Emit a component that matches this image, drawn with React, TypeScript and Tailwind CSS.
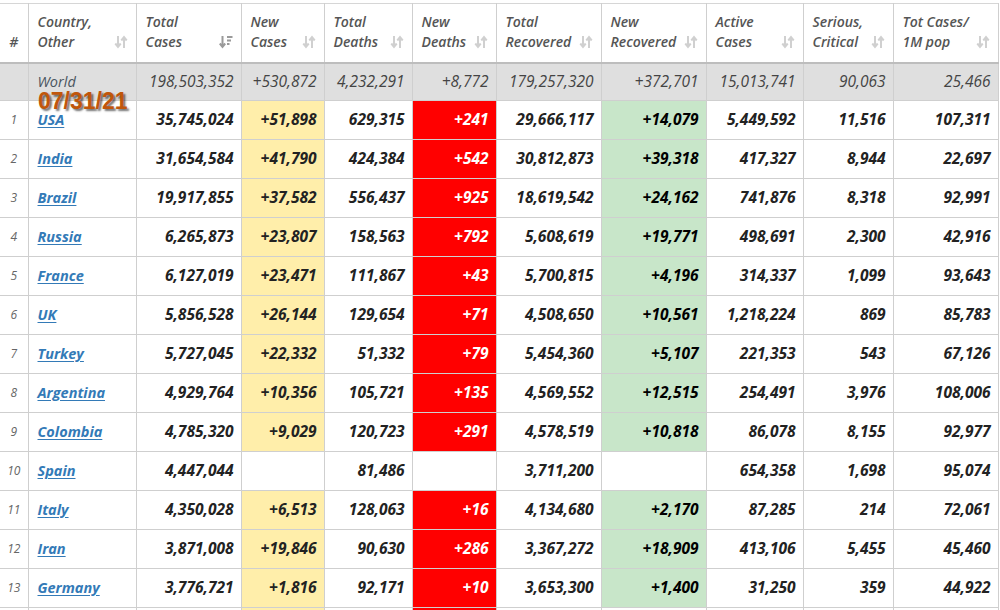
const rows: string[][] = [
  ["1", "USA", "35,745,024", "+51,898", "629,315", "+241", "29,666,117", "+14,079", "5,449,592", "11,516", "107,311"],
  ["2", "India", "31,654,584", "+41,790", "424,384", "+542", "30,812,873", "+39,318", "417,327", "8,944", "22,697"],
  ["3", "Brazil", "19,917,855", "+37,582", "556,437", "+925", "18,619,542", "+24,162", "741,876", "8,318", "92,991"],
  ["4", "Russia", "6,265,873", "+23,807", "158,563", "+792", "5,608,619", "+19,771", "498,691", "2,300", "42,916"],
  ["5", "France", "6,127,019", "+23,471", "111,867", "+43", "5,700,815", "+4,196", "314,337", "1,099", "93,643"],
  ["6", "UK", "5,856,528", "+26,144", "129,654", "+71", "4,508,650", "+10,561", "1,218,224", "869", "85,783"],
  ["7", "Turkey", "5,727,045", "+22,332", "51,332", "+79", "5,454,360", "+5,107", "221,353", "543", "67,126"],
  ["8", "Argentina", "4,929,764", "+10,356", "105,721", "+135", "4,569,552", "+12,515", "254,491", "3,976", "108,006"],
  ["9", "Colombia", "4,785,320", "+9,029", "120,723", "+291", "4,578,519", "+10,818", "86,078", "8,155", "92,977"],
  ["10", "Spain", "4,447,044", "", "81,486", "", "3,711,200", "", "654,358", "1,698", "95,074"],
  ["11", "Italy", "4,350,028", "+6,513", "128,063", "+16", "4,134,680", "+2,170", "87,285", "214", "72,061"],
  ["12", "Iran", "3,871,008", "+19,846", "90,630", "+286", "3,367,272", "+18,909", "413,106", "5,455", "45,460"],
  ["13", "Germany", "3,776,721", "+1,816", "92,171", "+10", "3,653,300", "+1,400", "31,250", "359", "44,922"],
]

const world = ["198,503,352", "+530,872", "4,232,291", "+8,772", "179,257,320", "+372,701", "15,013,741", "90,063", "25,466"]

const headers: [string, string][] = [
  ["Country,", "Other"],
  ["Total", "Cases"],
  ["New", "Cases"],
  ["Total", "Deaths"],
  ["New", "Deaths"],
  ["Total", "Recovered"],
  ["New", "Recovered"],
  ["Active", "Cases"],
  ["Serious,", "Critical"],
  ["Tot Cases/", "1M pop"],
]

const widths = [28, 108, 105, 83, 88, 84, 105, 105, 97, 90, 105]

function SortIcon({ active }: { active?: boolean }) {
  if (active) {
    return (
      <svg width="14" height="14" viewBox="0 0 14 14" className="shrink-0 text-[#9a9a9a]">
        <path d="M3.5 1v10.5M0.8 8.5l2.7 3.3 2.7-3.3" fill="none" stroke="currentColor" strokeWidth="2" />
        <path d="M8 2h5.5M8 5.5h4M8 9h2.5" stroke="currentColor" strokeWidth="2" />
      </svg>
    )
  }
  return (
    <svg width="14" height="14" viewBox="0 0 14 14" className="shrink-0 text-[#d0d0d0]">
      <path d="M4 1v10.5M1.3 8.5l2.7 3.3 2.7-3.3" fill="none" stroke="currentColor" strokeWidth="2" />
      <path d="M10 13V2.5M7.3 5.5l2.7-3.3 2.7 3.3" fill="none" stroke="currentColor" strokeWidth="2" />
    </svg>
  )
}

function cellBg(col: number, value: string) {
  if (!value) return ""
  if (col === 3) return "bg-[#ffeeaa]"
  if (col === 5) return "bg-[#ff0000] text-white"
  if (col === 7) return "bg-[#c8e6c9] text-black"
  return ""
}

export default function App() {
  return (
    <div className="relative h-[610px] w-[1000px] overflow-hidden bg-white pt-[3px] font-['Open_Sans',sans-serif] italic">
      <table className="w-[998px] table-fixed border-collapse">
        <colgroup>
          {widths.map((w, i) => (
            <col key={i} style={{ width: w }} />
          ))}
        </colgroup>
        <thead>
          <tr className="h-[59px] border-t border-[#d6d6d6]">
            <th className="border-r border-b-2 border-[#cfcfcf] border-b-[#bdbdbd] pb-[10px] align-bottom text-[14px] font-semibold text-[#555]">
              #
            </th>
            {headers.map(([a, b], i) => (
              <th
                key={i}
                className="border-r border-b-2 border-[#cfcfcf] border-b-[#bdbdbd] pr-[8px] pb-[10px] pl-[9px] text-left align-bottom text-[14px] leading-[20px] font-semibold text-[#555]"
              >
                <div>{a}</div>
                <div className="flex items-center justify-between">
                  <span>{b}</span>
                  <SortIcon active={i === 1} />
                </div>
              </th>
            ))}
          </tr>
        </thead>
        <tbody>
          <tr className="h-[38px] bg-[#dfdfdf] text-[15.5px] text-[#444]">
            <td className="border-r border-b border-[#cfcfcf]"></td>
            <td className="border-r border-b border-[#cfcfcf] pl-[9px] text-left text-[14.5px] text-[#4a5560]">World</td>
            {world.map((v, i) => (
              <td key={i} className="border-r border-b border-[#cfcfcf] pr-[7px] text-right">
                {v}
              </td>
            ))}
          </tr>
          {rows.map((r) => (
            <tr key={r[0]} className="h-[39px] text-[15.5px] font-bold text-[#222]">
              <td className="border-r border-b border-[#cfcfcf] text-center text-[12px] font-normal text-[#666]">{r[0]}</td>
              <td className="border-r border-b border-[#cfcfcf] pl-[9px] text-left text-[14.5px]">
                <a href="#" className="text-[#337ab7] underline underline-offset-2">
                  {r[1]}
                </a>
              </td>
              {r.slice(2).map((v, i) => (
                <td key={i} className={`border-r border-b border-[#cfcfcf] pr-[7px] text-right ${cellBg(i + 2, v)}`}>
                  {v}
                </td>
              ))}
            </tr>
          ))}
          <tr className="h-[39px]">
            <td className="border-r border-[#cfcfcf]"></td>
            <td className="border-r border-[#cfcfcf]"></td>
            <td className="border-r border-[#cfcfcf]"></td>
            <td className="border-r border-[#cfcfcf] bg-[#ffeeaa]"></td>
            <td className="border-r border-[#cfcfcf]"></td>
            <td className="border-r border-[#cfcfcf] bg-[#ff0000]"></td>
            <td className="border-r border-[#cfcfcf]"></td>
            <td className="border-r border-[#cfcfcf]"></td>
            <td className="border-r border-[#cfcfcf]"></td>
            <td className="border-r border-[#cfcfcf]"></td>
            <td className="border-r border-[#cfcfcf]"></td>
          </tr>
        </tbody>
      </table>
      <div className="absolute top-[84px] left-[38px] font-['Liberation_Sans',sans-serif] text-[23px] font-bold not-italic text-[#c0560b] [text-shadow:2px_2px_2px_rgba(0,0,0,0.55)]">
        07/31/21
      </div>
    </div>
  )
}
